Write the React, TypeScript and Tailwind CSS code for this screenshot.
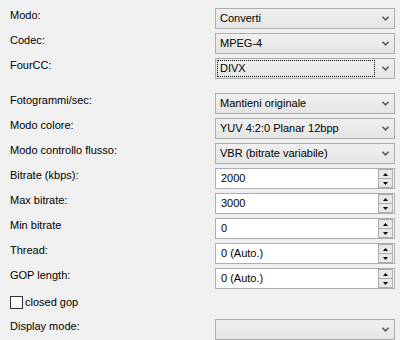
import type { ReactNode } from 'react'

const FONT = "font-['Liberation_Sans',Arial,sans-serif]"

function Chevron() {
  return (
    <svg width="7" height="5" viewBox="0 0 7 5" className="shrink-0">
      <path d="M0.5 0.8 L3.5 3.8 L6.5 0.8" fill="none" stroke="#606060" strokeWidth="1.6" />
    </svg>
  )
}

function Combo({ value, focused }: { value?: string; focused?: boolean }) {
  return (
    <div className="flex h-[21px] w-[180px] items-center border border-[#acacac] bg-gradient-to-b from-[#f0f0f0] to-[#e5e5e5] pl-px pr-[5px]">
      <div
        className={`flex h-[17px] flex-1 items-center pl-[2px] ${
          focused ? 'border border-dotted border-black' : 'border border-transparent'
        }`}
      >
        {value}
      </div>
      <div className="ml-[7px]">
        <Chevron />
      </div>
    </div>
  )
}

function Spin({ value }: { value: string }) {
  return (
    <div className="flex h-[21px] w-[180px] items-center border border-[#abadb3] bg-white pl-[5px] pr-px">
      <span className="flex-1">{value}</span>
      <div className="flex h-[19px] w-[15px] flex-col">
        <div className="flex flex-1 items-center justify-center border border-[#acacac] bg-[#e8e8e8]">
          <svg width="5" height="3" viewBox="0 0 5 3">
            <path d="M2.5 0 L5 3 L0 3 Z" fill="#000" />
          </svg>
        </div>
        <div className="flex flex-1 items-center justify-center border border-t-0 border-[#acacac] bg-[#e8e8e8]">
          <svg width="5" height="3" viewBox="0 0 5 3">
            <path d="M0 0 L5 0 L2.5 3 Z" fill="#000" />
          </svg>
        </div>
      </div>
    </div>
  )
}

function Row({ label, children }: { label: string; children: ReactNode }) {
  return (
    <div className="flex h-[21px] items-start">
      <div className="w-[205px] leading-[15px]">{label}</div>
      {children}
    </div>
  )
}

export default function App() {
  return (
    <div className={`${FONT} h-[340px] w-[400px] bg-[#f0f0f0] pl-[10px] pt-[8px] text-[11px] text-black`}>
      <div className="flex flex-col gap-[4px]">
        <Row label="Modo:"><Combo value="Converti" /></Row>
        <Row label="Codec:"><Combo value="MPEG-4" /></Row>
        <Row label="FourCC:"><Combo value="DIVX" focused /></Row>
      </div>
      <div className="mt-[14px] flex flex-col gap-[4px]">
        <Row label="Fotogrammi/sec:"><Combo value="Mantieni originale" /></Row>
        <Row label="Modo colore:"><Combo value="YUV 4:2:0 Planar 12bpp" /></Row>
        <Row label="Modo controllo flusso:"><Combo value="VBR (bitrate variabile)" /></Row>
        <Row label="Bitrate (kbps):"><Spin value="2000" /></Row>
        <Row label="Max bitrate:"><Spin value="3000" /></Row>
        <Row label="Min bitrate"><Spin value="0" /></Row>
        <Row label="Thread:"><Spin value="0 (Auto.)" /></Row>
        <Row label="GOP length:"><Spin value="0 (Auto.)" /></Row>
      </div>
      <div className="mt-[7px] flex h-[13px] items-center gap-[2px]">
        <div className="h-[13px] w-[13px] border border-[#333] bg-white" />
        <span>closed gop</span>
      </div>
      <div className="mt-[10px]">
        <Row label="Display mode:"><Combo /></Row>
      </div>
    </div>
  )
}
